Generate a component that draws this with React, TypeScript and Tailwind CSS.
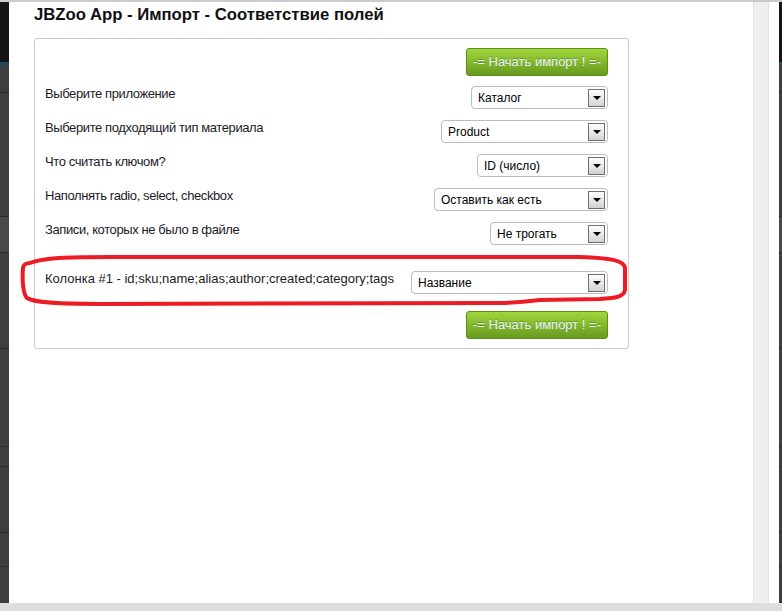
const rows = [
  { label: "Выберите приложение", value: "Каталог", w: "w-[137px]" },
  { label: "Выберите подходящий тип материала", value: "Product", w: "w-[167px]" },
  { label: "Что считать ключом?", value: "ID (число)", w: "w-[131px]" },
  { label: "Наполнять radio, select, checkbox", value: "Оставить как есть", w: "w-[174px]" },
  { label: "Записи, которых не было в файле", value: "Не трогать", w: "w-[118px]" },
];

function Select({ value, w }: { value: string; w: string }) {
  return (
    <div
      className={`${w} h-[23px] shrink-0 flex items-center justify-between pl-[6px] pr-[2px] bg-white border border-[#bcbcbc] rounded-[4px] text-[12px] leading-[14px] text-black`}
    >
      <span>{value}</span>
      <span className="w-[17px] h-[18px] flex items-center justify-center border border-[#6f6f6f] bg-linear-to-b from-white to-[#d2d2d2]">
        <span className="w-0 h-0 border-l-[4px] border-r-[4px] border-t-[4px] border-l-transparent border-r-transparent border-t-black" />
      </span>
    </div>
  );
}

function StartButton() {
  return (
    <button className="self-end w-[142px] h-[28px] rounded-[3px] border border-[#5d8e18] bg-linear-to-b from-[#a2d63c] to-[#679a1f] text-[13px] text-[#eaf5ff] [text-shadow:0_-1px_0_rgba(40,70,0,0.35)]">
      -= Начать импорт ! =-
    </button>
  );
}

function SideStrip() {
  return (
    <div className="h-full flex flex-col bg-[#3e3e3e]">
      <div className="h-[60px] bg-[#151515]" />
      <div className="h-[3px] bg-[#1d4c5e]" />
      <div className="h-[28px] border-b border-[#2c2c2c]" />
      <div className="h-[124px] border-b border-[#2c2c2c]" />
      <div className="h-[36px] bg-[#4a4a4a] border-b border-[#2c2c2c]" />
      <div className="h-[96px] border-b border-[#2c2c2c]" />
      <div className="h-[98px] border-b border-[#2c2c2c]" />
      <div className="h-[20px] border-b border-[#2c2c2c]" />
      <div className="h-[66px] border-b border-[#2c2c2c]" />
      <div className="h-[34px] border-b border-[#2c2c2c]" />
      <div className="flex-1" />
    </div>
  );
}

export default function App() {
  return (
    <div className="relative w-[782px] h-[611px] overflow-hidden flex flex-col bg-white font-['Liberation_Sans',Arial,sans-serif]">
      <div className="h-[2px] bg-[#cbcbcb]" />
      <div className="flex flex-1 min-h-0">
        <div className="w-[9px] shrink-0">
          <SideStrip />
        </div>

        {/* modal */}
        <div className="flex-1 flex bg-white">
          <div className="flex-1 pl-[25px] pt-[4px]">
            <h1 className="text-[16.7px] leading-[18px] font-bold text-[#111]">
              JBZoo App - Импорт - Соответствие полей
            </h1>

            <div className="mt-[14px] w-[595px] flex flex-col border border-[#cccccc] rounded-[3px] pt-[9px] pb-[9px] pl-[10px] pr-[20px]">
              <StartButton />

              <div className="mt-[10px] flex flex-col gap-[11px]">
                {rows.map((r) => (
                  <div key={r.label} className="flex items-start justify-between">
                    <span className="text-[13px] leading-[15px] tracking-[-0.4px] text-[#1c1c28]">{r.label}</span>
                    <Select value={r.value} w={r.w} />
                  </div>
                ))}
              </div>

              <div className="mt-[26px] flex items-start justify-between">
                <span className="text-[13px] leading-[15px] text-[#1c1c28]">
                  Колонка #1 - id;sku;name;alias;author;created;category;tags
                </span>
                <Select value="Название" w="w-[197px]" />
              </div>

              <div className="mt-[17px] flex flex-col">
                <StartButton />
              </div>
            </div>
          </div>

          {/* scrollbar track */}
          <div className="w-[16px] shrink-0 bg-[#efefef] border-l border-r border-[#e2e2e2]" />
          <div className="w-[10px] shrink-0 bg-white" />
        </div>

        <div className="w-[3px] shrink-0">
          <SideStrip />
        </div>
      </div>
      <div className="h-[8px] bg-[#dedede]" />

      {/* hand-drawn highlight */}
      <svg
        className="absolute inset-0 pointer-events-none"
        width="782"
        height="611"
        viewBox="0 0 782 611"
      >
        <path
          d="M 30 263 C 45 257, 80 257, 110 257 L 580 257 C 610 258, 624 260, 625 268 L 625 290 C 624 297, 615 298, 600 299 L 540 300 C 530 301, 520 303, 500 303 L 100 304 C 60 304, 35 303, 27 298 C 23 294, 22 280, 23 268 C 23 265, 26 263, 30 263 Z"
          fill="none"
          stroke="#ed1c24"
          strokeWidth="4"
          strokeLinejoin="round"
        />
      </svg>
    </div>
  );
}
